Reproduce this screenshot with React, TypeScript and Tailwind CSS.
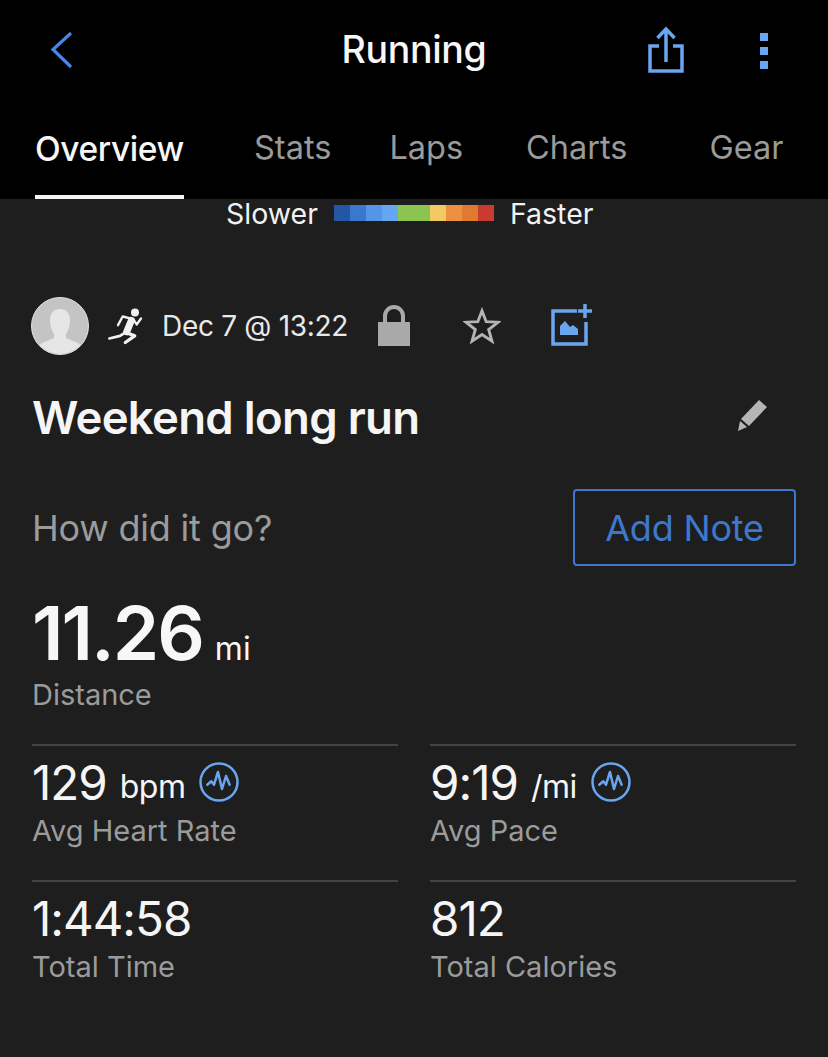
import type { ReactNode } from 'react';

const paceColors = ['#2456a6', '#3a78d0', '#5595e8', '#65a5f2', '#8cc451', '#8cc451', '#f3c964', '#ec913f', '#e07a30', '#c93a2f'];

function ShareIcon() {
  return (
    <svg width="38" height="48" viewBox="0 0 38 48" fill="none" stroke="#6aa5f0">
      <path d="M12 20H3v25h32V20h-9" strokeWidth="3.500" />
      <path d="M19 36V3M10.500 12 19 3l8.500 9" strokeWidth="3.500" />
    </svg>
  );
}

function PulseIcon() {
  return (
    <svg width="40" height="40" viewBox="0 0 40 40" fill="none" stroke="#6aa5f0" className="shrink-0">
      <circle cx="20" cy="20" r="18.500" strokeWidth="2.500" />
      <path d="M8.300 22.700 12.300 19.300 15 22.700 19 10 23 27 27 14 30.700 22.700" strokeWidth="2.500" strokeLinejoin="round" strokeLinecap="round" />
    </svg>
  );
}

function RunnerIcon() {
  return (
    <svg width="40" height="42" viewBox="260 60 120 125" fill="none" stroke="#f2f2f2" strokeLinejoin="round" strokeLinecap="round">
      <circle cx="347" cy="82" r="12" fill="#f2f2f2" stroke="none" />
      <path d="M296 120 310 94 342 102 352 118 365 100" strokeWidth="7" />
      <path d="M336 106 322 140" strokeWidth="21" />
      <path d="M320 142 346 152 318 172" strokeWidth="10" />
      <path d="M318 142 302 152 270 160" strokeWidth="8" />
    </svg>
  );
}

function Avatar() {
  return (
    <div className="w-[58px] h-[58px] rounded-full bg-[#c4c4c4] border border-[#e2e2e2] overflow-hidden shrink-0">
      <svg width="56" height="56" viewBox="0 0 56 56" fill="#e6e6e6">
        <path d="M28 11c7 0 10 5 10 12 0 6-2 10-4 13v4l12 5c2 1 3 3 4 11H6c1-8 2-10 4-11l12-5v-4c-2-3-4-7-4-13 0-7 3-12 10-12z" />
      </svg>
    </div>
  );
}

function Stat({ value, unit, label, icon }: { value: string; unit?: string; label: string; icon?: ReactNode }) {
  return (
    <div className="border-t-2 border-[#444444] h-[136px]">
      <div className="flex items-center h-[72px] pt-[2px] text-[#f5f5f5]">
        <span className="text-[47.500px] leading-none tracking-[-1px]">{value}</span>
        {unit && <span className="text-[32px] leading-none ml-[13px] mt-[8px] tracking-[-0.5px]">{unit}</span>}
        {icon && <span className="ml-[14px] -mt-[2px]">{icon}</span>}
      </div>
      <div className="text-[29px] leading-[32px] -mt-[3px] text-[#9b9b9b]">{label}</div>
    </div>
  );
}

export default function App() {
  return (
    <div className="w-[828px] h-[1057px] overflow-hidden bg-[#1e1e1e] font-['Inter','Liberation_Sans',sans-serif]">
      <header className="bg-black h-[199px]">
        <div className="flex items-center h-[100px] relative">
          <svg width="24" height="36" viewBox="0 0 24 36" fill="none" stroke="#4a86e8" strokeWidth="3.200" className="ml-[49px]">
            <path d="M22 1 4 17.500 22 35" />
          </svg>
          <h1 className="absolute left-0 right-0 text-center text-[37.500px] font-medium text-[#f7f7f7] tracking-[-0.3px]">Running</h1>
          <div className="ml-auto flex items-center pb-px">
            <ShareIcon />
            <div className="flex flex-col gap-[6px] mt-[3px] ml-[75px] mr-[60px]">
              <span className="w-[8px] h-[8px] bg-[#6aa5f0]" />
              <span className="w-[8px] h-[8px] bg-[#6aa5f0]" />
              <span className="w-[8px] h-[8px] bg-[#6aa5f0]" />
            </div>
          </div>
        </div>
        <nav className="flex h-[99px] text-[32.500px] text-[#9a9a9a]">
          <div className="ml-[35px] w-[149px] text-center h-full border-b-[4px] border-[#f5f5f5] pt-[24px] text-[33.500px] font-medium text-[#f7f7f7] tracking-[-0.4px]">Overview</div>
          <div className="ml-[70px] pt-[24px]">Stats</div>
          <div className="ml-[58px] pt-[24px]">Laps</div>
          <div className="ml-[63px] pt-[24px]">Charts</div>
          <div className="ml-[82px] pt-[24px]">Gear</div>
        </nav>
      </header>

      <div className="flex items-center h-[30px] text-[28.500px] text-[#f2f2f2]">
        <span className="ml-[226px]">Slower</span>
        <div className="flex ml-[16px] h-[16px] -mt-[2px]">
          {paceColors.map((c, i) => (
            <span key={i} className="w-[16px] h-full" style={{ backgroundColor: c }} />
          ))}
        </div>
        <span className="ml-[16px]">Faster</span>
      </div>

      <main className="px-[32px]">
        <div className="flex items-center mt-[68px] h-[58px]">
          <div className="-ml-px"><Avatar /></div>
          <span className="ml-[17px]"><RunnerIcon /></span>
          <span className="ml-[16px] text-[28px] text-[#e8e8e8] tracking-[-0.3px]">Dec 7 @ 13:22</span>
          <svg width="34" height="42" viewBox="0 0 34 42" className="ml-[29px]" fill="#a9a9a9">
            <path d="M6 18v-7a11 11 0 0 1 22 0v7h-4v-7a7 7 0 0 0-14 0v7z" />
            <rect x="1" y="17" width="32" height="24" />
          </svg>
          <svg width="38" height="40" viewBox="0 0 40 40" fill="none" stroke="#b4b4b4" strokeWidth="3" className="ml-[52px]">
            <path d="M20 4 24.400 15.500 37 16 27 23.700 30.500 36 20 29 9.500 36 13 23.700 3 16 15.600 15.500z" />
          </svg>
          <svg width="42" height="42" viewBox="0 0 42 42" fill="none" className="ml-[50px] -mt-[3px]">
            <path d="M26 7H2v33h33V18" stroke="#6aa5f0" strokeWidth="3.500" />
            <path d="M34 0v14M27 7h14" stroke="#6aa5f0" strokeWidth="3.500" />
            <path d="M9 31V22l5-5 5 6 3-2 5 4v6z" fill="#6aa5f0" />
          </svg>
        </div>

        <div className="flex items-center mt-[33px] h-[60px]">
          <h2 className="text-[45.500px] font-semibold text-[#f5f5f5] tracking-[-0.7px]">Weekend long run</h2>
          <svg width="30" height="32" viewBox="0 0 30 32" fill="#b5b5b5" className="ml-auto mr-[28px] -mt-[6px]">
            <path d="M21 1l8 7L11 27l-8-7z" />
            <path d="M2 22l7 6-9 4z" />
          </svg>
        </div>

        <div className="flex items-center justify-between mt-[41px]">
          <span className="text-[36px] text-[#9b9b9b] tracking-[-0.2px]">How did it go?</span>
          <button className="w-[223px] h-[77px] border-2 border-[#3d78cc] rounded-[4px] text-[36px] text-[#3d78cc] tracking-[-0.2px]">Add Note</button>
        </div>

        <div className="flex items-baseline mt-[29px] h-[74px] text-[#f7f7f7]">
          <span className="text-[74.500px] leading-[76px] font-semibold tracking-[-2px]">11.26</span>
          <span className="ml-[12px] text-[32px]">mi</span>
        </div>
        <div className="text-[29px] leading-[32px] mt-[10px] text-[#9b9b9b]">Distance</div>

        <div className="grid grid-cols-2 gap-x-[32px] mt-[33px] w-[764px]">
          <Stat value="129" unit="bpm" label="Avg Heart Rate" icon={<PulseIcon />} />
          <Stat value="9:19" unit="/mi" label="Avg Pace" icon={<PulseIcon />} />
          <Stat value="1:44:58" label="Total Time" />
          <Stat value="812" label="Total Calories" />
        </div>
      </main>
    </div>
  );
}
